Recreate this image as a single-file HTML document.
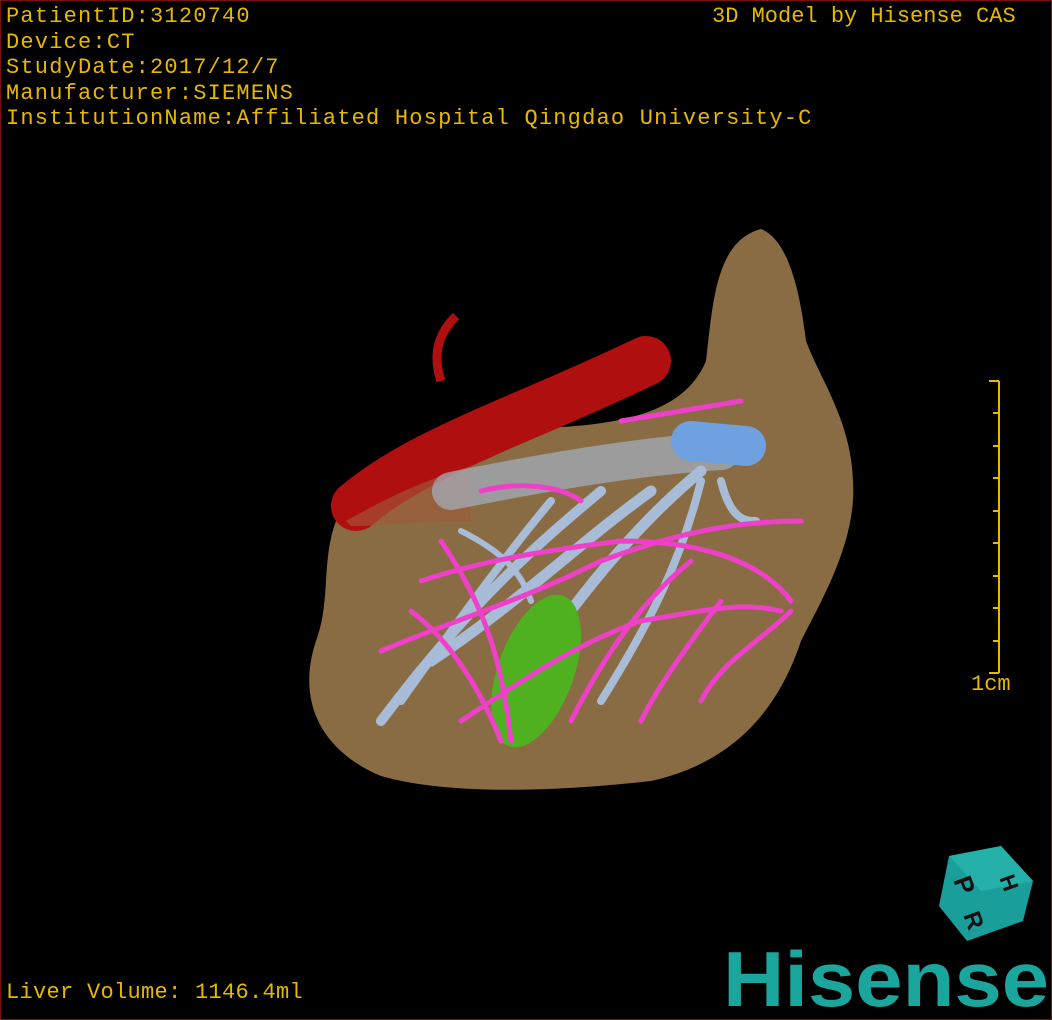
<!DOCTYPE html>
<html><head><meta charset="utf-8"><style>
html,body{margin:0;padding:0;background:#000;}
#w{position:relative;width:1050px;height:1018px;border:1px solid #7a1010;overflow:hidden;background:#000;}
.t{position:absolute;color:#e8b800;font-family:"Liberation Mono","DejaVu Sans Mono",monospace;font-size:22px;line-height:25.5px;white-space:pre;letter-spacing:1.2px;}
svg{position:absolute;left:0;top:0;}
</style></head><body><div id="w">
<svg width="1050" height="1018" viewBox="0 0 1050 1018">
<path d="M760 228 C790 240 800 300 805 340 C820 380 850 420 852 480 C856 540 820 600 800 640 C780 700 740 760 650 780 C560 790 450 795 380 775 C320 750 295 700 315 640 C330 600 320 560 335 520 C360 460 440 430 520 428 C600 425 680 420 705 360 C712 300 715 240 760 228 Z" fill="#8a6c44"/>
<path d="M355 505 C420 450 520 420 645 360" stroke="#b00f0f" stroke-width="50" fill="none" stroke-linecap="round"/>
<path d="M440 380 C430 350 440 330 455 315" stroke="#b00f0f" stroke-width="9" fill="none"/>
<path d="M345 520 C380 500 420 480 470 465 L470 520 C420 520 380 525 350 525 Z" fill="#a05a3a" opacity="0.6"/>
<g stroke="#a8bcd8" fill="none" stroke-linecap="round">
<path d="M450 490 C550 470 640 455 720 450" stroke-width="38" opacity="0.6"/>
<path d="M690 440 L745 445" stroke="#6fa0e0" stroke-width="40"/>
<path d="M700 470 C640 520 590 580 540 650" stroke-width="11"/>
<path d="M650 490 C580 540 520 600 430 660" stroke-width="11"/>
<path d="M600 490 C540 540 470 600 380 720" stroke-width="10"/>
<path d="M550 500 C500 560 450 630 400 700" stroke-width="8"/>
<path d="M700 480 C680 560 650 620 600 700" stroke-width="8"/>
<path d="M720 480 C730 520 745 520 755 520" stroke-width="8"/>
<path d="M460 530 C500 550 520 570 530 600" stroke-width="6"/>
</g>
<ellipse cx="535" cy="670" rx="38" ry="80" transform="rotate(20 535 670)" fill="#4fb020"/>
<g stroke="#ee40c8" fill="none" stroke-width="5" stroke-linecap="round">
<path d="M380 650 C450 620 520 600 600 560 C680 530 740 520 800 520"/>
<path d="M420 580 C480 560 540 550 620 540 C700 540 760 560 790 600"/>
<path d="M460 720 C520 680 580 640 640 620 C700 610 740 600 780 610"/>
<path d="M440 540 C480 600 500 650 510 740"/>
<path d="M570 720 C600 660 640 600 690 560"/>
<path d="M640 720 C660 680 690 640 720 600"/>
<path d="M480 490 C520 480 560 485 580 500"/>
<path d="M620 420 L740 400"/>
<path d="M410 610 C450 640 480 690 500 740"/>
<path d="M700 700 C720 660 760 640 790 610"/>
</g>
<g stroke="#e8b800" stroke-width="2"><line x1="998" y1="380" x2="998" y2="672"/>
<line x1="988" y1="380" x2="998" y2="380"/><line x1="992" y1="412" x2="998" y2="412"/><line x1="992" y1="445" x2="998" y2="445"/><line x1="992" y1="477" x2="998" y2="477"/><line x1="992" y1="510" x2="998" y2="510"/><line x1="992" y1="542" x2="998" y2="542"/><line x1="992" y1="575" x2="998" y2="575"/><line x1="992" y1="607" x2="998" y2="607"/><line x1="992" y1="640" x2="998" y2="640"/><line x1="988" y1="672" x2="998" y2="672"/></g>
<polygon points="948,855 1000,845 1032,880 1022,920 966,940 938,905" fill="#1a9e9a"/>
<polygon points="948,855 1000,845 1032,880 980,890" fill="#25b0aa"/>
<text x="955" y="895" font-family="Liberation Sans" font-size="26" font-weight="bold" fill="#111" transform="rotate(70 965 885)">P</text>
<text x="965" y="930" font-family="Liberation Sans" font-size="24" font-weight="bold" fill="#111" transform="rotate(70 975 920)">R</text>
<text x="1003" y="890" font-family="Liberation Sans" font-size="22" font-weight="bold" fill="#111" transform="rotate(70 1010 880)">H</text>
<text x="722" y="1005" font-family="Liberation Sans" font-size="78" font-weight="bold" fill="#1aa69c" textLength="326" lengthAdjust="spacingAndGlyphs">Hisense</text>
</svg>
<div class="t" style="left:5px;top:3px">PatientID:3120740
Device:CT
StudyDate:2017/12/7
Manufacturer:SIEMENS
InstitutionName:Affiliated Hospital Qingdao University-C</div>
<div class="t" style="left:711px;top:3px;letter-spacing:0">3D Model by Hisense CAS</div>
<div class="t" style="left:970px;top:671px;letter-spacing:0">1cm</div>
<div class="t" style="left:5px;top:979px;letter-spacing:0.3px">Liver Volume: 1146.4ml</div>
</div></body></html>
